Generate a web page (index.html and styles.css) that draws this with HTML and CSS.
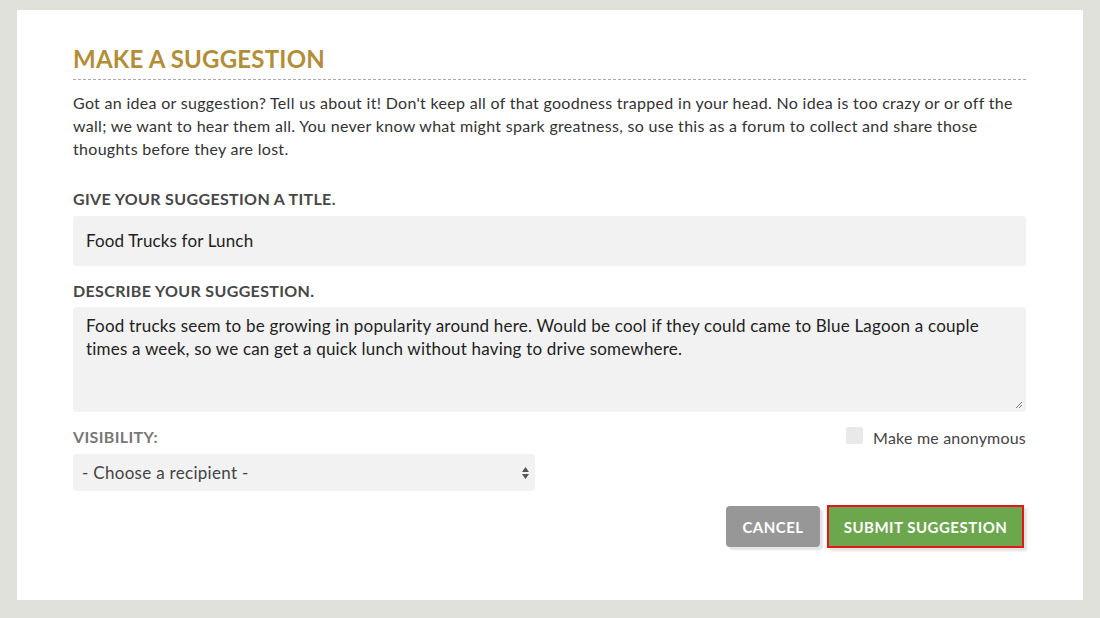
FILE: index.html
```html
<!DOCTYPE html>
<html>
<head>
<meta charset="utf-8">
<link rel="stylesheet" href="styles.css">
</head>
<body>
<div class="card">
  <h1 class="title">MAKE A SUGGESTION</h1>
  <p class="intro">Got an idea or suggestion? Tell us about it! Don't keep all of that goodness trapped in your head. No idea is too crazy or or off the<br>wall; we want to hear them all. You never know what might spark greatness, so use this as a forum to collect and share those<br>thoughts before they are lost.</p>

  <label class="label first">GIVE YOUR SUGGESTION A TITLE.</label>
  <div class="input">Food Trucks for Lunch</div>

  <label class="label">DESCRIBE YOUR SUGGESTION.</label>
  <div class="textarea">Food trucks seem to be growing in popularity around here. Would be cool if they could came to Blue Lagoon a couple<br>times a week, so we can get a quick lunch without having to drive somewhere.
    <svg class="grip" width="8" height="8" viewBox="0 0 8 8"><path d="M7 1L1 7M7 4L4 7" stroke="#777" stroke-width="1"/></svg>
  </div>

  <div class="vis-row">
    <span class="label vis">VISIBILITY:</span>
    <span class="anon"><span class="check"></span>Make me anonymous</span>
  </div>
  <div class="select">- Choose a recipient -
    <svg class="arrows" width="9" height="16" viewBox="0 0 9 16"><path d="M4.5 2L8 7H1z M4.5 14L8 9H1z" fill="#555"/></svg>
  </div>

  <div class="actions">
    <button class="btn cancel">CANCEL</button>
    <button class="btn submit">SUBMIT SUGGESTION</button>
  </div>
</div>
</body>
</html>
```
FILE: styles.css
```css
* { box-sizing: border-box; }
html, body { margin: 0; padding: 0; }
body {
  background: #e1e1dc;
  font-family: Lato, "Noto Sans", sans-serif;
  color: #333;
  height: 618px;
  overflow: hidden;
}
.card {
  background: #fff;
  margin: 10px 17px 0 17px;
  height: 590px;
  padding: 35px 57px 0 56px;
  display: flex;
  flex-direction: column;
}
.title {
  margin: 0;
  font-size: 24px;
  line-height: 28px;
  font-weight: 700;
  letter-spacing: 0.2px;
  color: #b38e37;
  padding-bottom: 6px;
  border-bottom: 1px dashed #aaa;
}
.intro {
  margin: 11px 0 0 0;
  font-size: 16px;
  line-height: 23px;
  letter-spacing: 0.3px;
  color: #333;
  white-space: nowrap;
}
.label {
  display: block;
  font-size: 16px;
  line-height: 20px;
  font-weight: 700;
  letter-spacing: 0.35px;
  color: #474747;
  margin-top: 15px;
}
.label.first { margin-top: 29px; }
.input {
  margin-top: 7px;
  height: 50px;
  background: #f2f2f2;
  border-radius: 4px;
  padding: 0 13px;
  font-size: 17px;
  line-height: 50px;
  letter-spacing: 0.15px;
  color: #222;
}
.textarea {
  position: relative;
  margin-top: 6px;
  height: 105px;
  background: #f2f2f2;
  border-radius: 4px;
  padding: 7px 13px;
  font-size: 17px;
  line-height: 23px;
  letter-spacing: 0.2px;
  color: #222;
}
.grip { position: absolute; right: 3px; bottom: 3px; }
.vis-row {
  margin-top: 15px;
  display: flex;
  justify-content: space-between;
  align-items: center;
  height: 20px;
}
.label.vis { margin: 0; color: #777; }
.anon {
  display: flex;
  align-items: center;
  font-size: 16px;
  letter-spacing: 0.2px;
  color: #444;
}
.check {
  width: 17px;
  height: 17px;
  background: #e9e9e9;
  border-radius: 2px;
  margin-right: 10px;
  margin-top: -3px;
}
.select {
  position: relative;
  margin-top: 7px;
  width: 462px;
  height: 37px;
  background: #f2f2f2;
  border-radius: 4px;
  padding: 0 9px;
  font-size: 17px;
  line-height: 37px;
  letter-spacing: 0.3px;
  color: #444;
}
.arrows { position: absolute; right: 5px; top: 11px; }
.actions {
  margin-top: 14px;
  display: flex;
  justify-content: flex-end;
  align-items: center;
  gap: 7px;
  padding-right: 2px;
}
.btn {
  font-family: Lato, "Noto Sans", sans-serif;
  font-size: 15px;
  font-weight: 700;
  letter-spacing: 0.5px;
  color: #fff;
  border: none;
  cursor: pointer;
}
.cancel {
  width: 94px;
  height: 41px;
  background: #979797;
  border-radius: 4px;
  box-shadow: 3px 3px 2px #e4e4e4;
}
.submit {
  width: 197px;
  height: 43px;
  background: #6ca64d;
  border: 2px solid #e8161a;
  box-shadow: 3px 3px 2px #e4e4e4;
}
```
